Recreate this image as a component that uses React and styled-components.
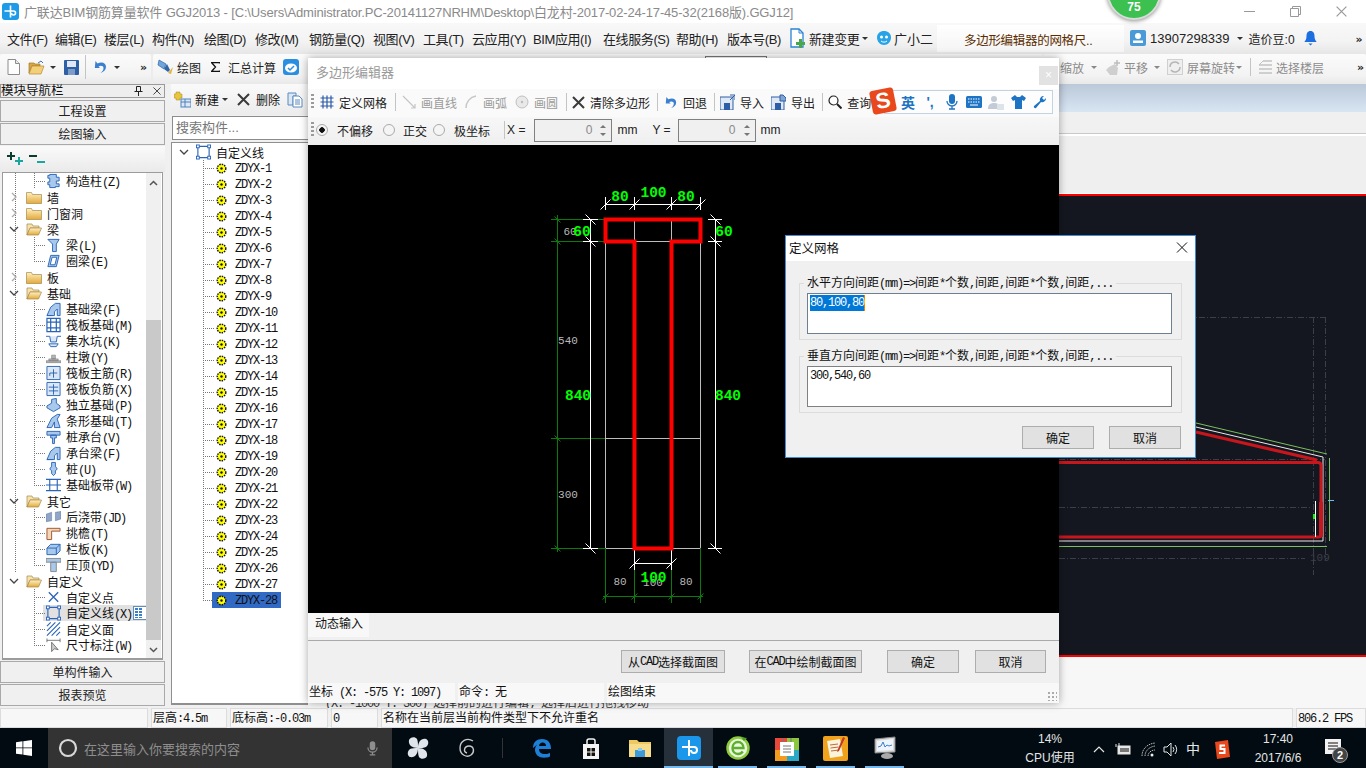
import styled, { createGlobalStyle } from "styled-components";

const GlobalStyle = createGlobalStyle`
  html, body { margin: 0; padding: 0; overflow: hidden; background: #f0f0f0; }
  body { font-family: "Liberation Sans", "Noto Sans CJK SC", sans-serif; font-size: 12px; color: #111; }
  * { box-sizing: border-box; }
`;

const Root = styled.div`
  position: relative;
  width: 1366px;
  height: 768px;
  overflow: hidden;
  display: flex;
  flex-direction: column;
`;

/* 窄等宽西文 + 12px 中文, 模拟宋体 */
const Lat = styled.span`
  font-family: "Liberation Mono", monospace;
  font-size: 12px;
  letter-spacing: -1.2px;
`;

const CompName = styled(Lat)`
  margin-top: 2px;
`;

const Sim = ({ children }) =>
  children.split(/([\x20-\x7e]+)/).map((part, i) =>
    i % 2 ? <Lat key={i}>{part}</Lat> : part
  );

const Ico = styled.svg`
  flex: none;
  display: block;
`;

const Caret = styled.span`
  flex: none;
  width: 0;
  height: 0;
  margin-left: ${(p) => p.$ml ?? 6}px;
  border-left: 3px solid transparent;
  border-right: 3px solid transparent;
  border-top: 3px solid ${(p) => p.$color || "#333"};
`;

const More = styled.span`
  font-family: "DejaVu Sans", sans-serif;
  font-size: 11px;
  font-weight: bold;
  line-height: 10px;
  color: #222;
  align-self: flex-start;
  margin-top: 4px;
`;

/* ---------- 标题栏 ---------- */
const TitleBar = styled.div`
  height: 23px;
  flex: none;
  background: #fff;
  display: flex;
  align-items: center;
  padding-left: 2px;
`;

const TitleText = styled.div`
  margin-left: 5px;
  font-size: 13px;
  color: #8a8a8a;
  white-space: nowrap;
  letter-spacing: -0.16px;
`;

const WinControls = styled.div`
  margin-left: auto;
  display: flex;
  align-items: center;
  padding-right: 2px;
`;

const WinBtn = styled.div`
  width: 46px;
  height: 20px;
  display: flex;
  align-items: center;
  justify-content: center;
`;

/* ---------- 菜单栏 ---------- */
const MenuBar = styled.div`
  height: 31px;
  flex: none;
  display: flex;
  align-items: center;
  padding: 0 0 1px 7px;
  background: linear-gradient(#f8f8f8, #f3f3f3 60%, #e6e6e6);
  font-size: 13px;
  color: #222;
  position: relative;
`;

const MenuItem = styled.div`
  width: ${(p) => p.$w}px;
  flex: none;
  white-space: nowrap;
  letter-spacing: -0.4px;
`;

const MenuGroup = styled.div`
  display: flex;
  align-items: center;
  flex: none;
  margin-left: ${(p) => p.$ml || 0}px;
`;

const NoticeTab = styled.div`
  width: 187px;
  height: 27px;
  margin-left: 4px;
  flex: none;
  background: linear-gradient(#fff, #f4f4f4);
  color: #5c2d00;
  font-size: 12.5px;
  letter-spacing: -0.3px;
  padding: 5px 0 0 27px;
  white-space: nowrap;
`;

const AccountText = styled.span`
  flex: none;
  margin-left: ${(p) => p.$ml}px;
  font-size: 12px;
  white-space: nowrap;
  letter-spacing: ${(p) => p.$ls || 0}px;
`;

/* ---------- 工具栏 ---------- */
const ToolBar = styled.div`
  height: 30px;
  flex: none;
  display: flex;
  background: #ececec;
  font-size: 12px;
  color: #222;
`;

const ToolSection = styled.div`
  height: 30px;
  display: flex;
  align-items: center;
  flex: none;
  width: ${(p) => p.$w}px;
  padding: 0 0 4px ${(p) => p.$pl || 0}px;
  margin-left: ${(p) => p.$ml || 0}px;
  background: linear-gradient(#fbfbfb, #f3f3f3 70%, #e9e9e9);
  border-radius: 2px;
  color: ${(p) => (p.$muted ? "#8c8c8c" : "#222")};
  font-size: 12px;
`;

const ToolItem = styled.div`
  display: flex;
  align-items: center;
  flex: none;
  gap: ${(p) => p.$gap ?? 5}px;
  margin-left: ${(p) => p.$ml || 0}px;
  white-space: nowrap;
  color: ${(p) => (p.$off ? "#9a9a9a" : "inherit")};
`;

const ToolSep = styled.div`
  width: 1px;
  height: ${(p) => p.$h || 18}px;
  flex: none;
  background: #c4c4c4;
  margin-left: ${(p) => p.$ml || 0}px;
`;

const Grip = styled.div`
  width: 3px;
  height: 16px;
  flex: none;
  background: repeating-linear-gradient(#9a9a9a 0 2px, transparent 2px 4px);
`;

const PeekBox = styled.div`
  width: 62px;
  height: 3px;
  flex: none;
  align-self: flex-start;
  margin: 2px 0 0 406px;
  background: #fff;
  border: 1px solid #777;
  border-bottom: 0;
`;

/* ---------- 主体 ---------- */
const Body = styled.div`
  height: 624px;
  flex: none;
  display: flex;
`;

const Nav = styled.div`
  width: 165px;
  flex: none;
  display: flex;
  flex-direction: column;
`;

const NavHead = styled.div`
  height: 14px;
  flex: none;
  display: flex;
  align-items: center;
  border: 1px solid #9a9a9a;
  background: #eee;
  font-size: 12.5px;
  line-height: 12px;
  white-space: nowrap;
  margin-bottom: 2px;
`;

const NavBtn = styled.div`
  height: 22px;
  flex: none;
  margin-bottom: 1px;
  padding-bottom: 2px;
  border: 1px solid #a9a9a9;
  background: #f0f0f0;
  display: flex;
  align-items: center;
  justify-content: center;
  font-size: 12px;
  color: #222;
`;

const NavTools = styled.div`
  height: 26px;
  flex: none;
  display: flex;
  align-items: center;
  gap: 5px;
  padding-left: 7px;
  background: linear-gradient(#fafafa, #eaeaea);
`;

const NavTree = styled.div`
  height: 488px;
  flex: none;
  margin: 0 2px 1px;
  border: 1px solid #9c9c9c;
  border-bottom-width: 2px;
  background: #fff;
  display: flex;
`;

const NavRows = styled.div`
  width: 143px;
  flex: none;
  overflow: hidden;
`;

const guideV = (x) =>
  `linear-gradient(#777 50%, transparent 50%) ${x}px 0 / 1px 2px repeat-y`;

const NavRow = styled.div`
  position: relative;
  height: 16px;
  display: flex;
  align-items: center;
  white-space: nowrap;
  padding-left: ${(p) => (p.$leaf ? 43 : 6)}px;
  background: ${(p) => (p.$rail ? guideV(12) : "none")};
  font-size: 12px;

  &::before {
    content: "";
    display: ${(p) => (p.$leaf ? "block" : "none")};
    position: absolute;
    left: 31px;
    top: 0;
    width: 1px;
    height: ${(p) => (p.$last ? "50%" : "100%")};
    background: ${guideV(0)};
  }

  &::after {
    content: "";
    display: ${(p) => (p.$leaf ? "block" : "none")};
    position: absolute;
    left: 31px;
    top: 8px;
    width: 12px;
    height: 1px;
    background: linear-gradient(90deg, #777 50%, transparent 50%) 0 0 / 2px 1px repeat-x;
  }
`;

const NavLabel = styled.span`
  margin-left: 5px;
  padding-right: 1px;
  display: flex;
  align-items: center;
  height: 16px;
`;

const HotRow = styled.div`
  position: absolute;
  left: 40px;
  right: 0;
  top: 0;
  height: 16px;
  background: #e1e1e1;
  z-index: 0;
`;

const RowContent = styled.div`
  position: relative;
  z-index: 1;
  display: flex;
  align-items: center;
  background: transparent;
`;

const MiniColumns = styled.div`
  position: absolute;
  right: 0;
  top: 1px;
  width: 13px;
  height: 14px;
  z-index: 1;
  background: #fff;
  border: 1px solid #5f8fc0;
  border-right: 0;
  padding: 1px;
  display: flex;
  gap: 1px;
`;

const MiniCol = styled.div`
  width: 3px;
  background: repeating-linear-gradient(#3c7fc9 0 2px, #fff 2px 3px);
`;

const ScrollBar = styled.div`
  width: 15px;
  flex: none;
  display: flex;
  flex-direction: column;
  background: #f0f0f0;
`;

const ScrollArrow = styled.div`
  height: 19px;
  flex: none;
  display: flex;
  align-items: center;
  justify-content: center;
`;

const ScrollTrack = styled.div`
  flex: 1;
  display: flex;
  flex-direction: column;
`;

const ScrollThumb = styled.div`
  margin-top: 128px;
  height: 320px;
  background: #c9c9c9;
`;

/* 构件列表 */
const CompPanel = styled.div`
  width: 137px;
  flex: none;
  margin-left: 6px;
  display: flex;
  flex-direction: column;
  background: #f0f0f0;
`;

const CompTools = styled.div`
  height: 31px;
  flex: none;
  display: flex;
  align-items: center;
  padding-left: 3px;
  font-size: 12px;
  background: linear-gradient(#fafafa, #ececec);
  white-space: nowrap;
  overflow: hidden;
`;

const SearchBox = styled.div`
  height: 24px;
  flex: none;
  margin: 1px 0 2px 1px;
  border: 1px solid #8c8c8c;
  border-right: 0;
  background: #fff;
  color: #777;
  font-size: 13px;
  line-height: 22px;
  padding-left: 3px;
`;

const CompTree = styled.div`
  flex: 1;
  background: #fff;
  border: 1px solid #8f8f8f;
  border-right: 0;
  border-bottom-width: 2px;
  margin-bottom: 3px;
  padding-top: 1px;
  position: relative;
`;

const CompRoot = styled.div`
  height: 16px;
  display: flex;
  align-items: center;
  padding-left: 7px;
  font-size: 12px;
`;

const CompRow = styled.div`
  position: relative;
  height: 16px;
  display: flex;
  align-items: center;
  padding-left: 44px;

  &::before {
    content: "";
    position: absolute;
    left: 31px;
    top: 0;
    width: 1px;
    height: ${(p) => (p.$last ? "50%" : "100%")};
    background: ${guideV(0)};
  }

  &::after {
    content: "";
    position: absolute;
    left: 31px;
    top: 8px;
    width: 12px;
    height: 1px;
    background: linear-gradient(90deg, #777 50%, transparent 50%) 0 0 / 2px 1px repeat-x;
  }
`;

const CompChip = styled.div`
  width: 69px;
  height: 16px;
  margin-left: -4px;
  padding-left: 4px;
  display: flex;
  align-items: center;
  gap: 8px;
  background: ${(p) => (p.$on ? "#316ac5" : "transparent")};
  color: #111;
`;

/* 右侧绘图区 */
const Workspace = styled.div`
  flex: 1;
  display: flex;
  flex-direction: column;
  background: #f7f7f7;
`;

const BlueBand = styled.div`
  height: 28px;
  flex: none;
  background: linear-gradient(#bbc8d8, #d8e5f3);
`;

const PropStrip = styled.div`
  height: 22px;
  flex: none;
  background: #f0f0f0;
  border-bottom: 1px solid #c9c9c9;
`;

const GreyBlock = styled.div`
  height: 60px;
  flex: none;
  background: #efefef;
  border-top: 2px solid #fff;
  border-bottom: 1px solid #fff;
`;

const RedRule = styled.div`
  height: ${(p) => p.$h}px;
  flex: none;
  background: #f00;
`;

const DarkCanvas = styled.svg`
  width: 1058px;
  height: 459px;
  flex: none;
  display: block;
  background: #14171f;
`;

const HintRow = styled.div`
  margin-top: auto;
  height: 8px;
  flex: none;
  overflow: hidden;
  font-size: 12px;
  line-height: 7px;
  padding-left: 17px;
  white-space: nowrap;
  color: #333;
`;

/* ---------- 状态栏 ---------- */
const StatusBar = styled.div`
  height: 20px;
  flex: none;
  display: flex;
  gap: 3px;
  background: #f0f0f0;
`;

const StatusCell = styled.div`
  width: ${(p) => p.$w}px;
  flex: ${(p) => (p.$w ? "none" : 1)};
  background: #f7f7f7;
  border: 1px solid #dcdcdc;
  font-size: 12px;
  line-height: 18px;
  padding-left: 1px;
  white-space: nowrap;
`;

/* ---------- 任务栏 ---------- */
const Taskbar = styled.div`
  height: 40px;
  flex: none;
  display: flex;
  background: #010b11;
  color: #fff;
`;

const StartBtn = styled.div`
  width: 48px;
  display: flex;
  align-items: center;
  justify-content: center;
`;

const SearchTask = styled.div`
  width: 344px;
  flex: none;
  background: #333;
  display: flex;
  align-items: center;
  padding-left: 10px;
  color: #8e8e8e;
  font-size: 13px;
`;

const SearchTaskText = styled.span`
  margin-left: 6px;
  flex: 1;
`;

const TaskIcon = styled.div`
  position: relative;
  width: ${(p) => p.$w || 49}px;
  margin-left: ${(p) => p.$ml || 0}px;
  flex: none;
  display: flex;
  align-items: center;
  justify-content: center;
  background: ${(p) => (p.$active ? "#25303a" : "transparent")};

  &::after {
    content: "";
    display: ${(p) => (p.$open ? "block" : "none")};
    position: absolute;
    left: ${(p) => (p.$active ? 0 : 5)}px;
    right: ${(p) => (p.$active ? 0 : 5)}px;
    bottom: 0;
    height: 2px;
    background: #76b9ed;
  }
`;

const TaskSep = styled.div`
  width: 1px;
  height: 20px;
  align-self: center;
  background: #333;
  margin: 0 14px 0 11px;
  flex: none;
`;

const Tray = styled.div`
  margin-left: auto;
  display: flex;
  align-items: stretch;
  padding-right: 10px;
`;

const TrayItem = styled.div`
  width: ${(p) => p.$w}px;
  margin-left: ${(p) => p.$ml || 0}px;
  padding-top: 2px;
  flex: none;
  display: flex;
  flex-direction: column;
  align-items: center;
  justify-content: center;
  font-size: ${(p) => p.$fs || 12}px;
  line-height: ${(p) => p.$lh || 19}px;
  color: #e6e6e6;
  white-space: nowrap;
`;

const NoticeIcon = styled.div`
  position: relative;
  width: 18px;
  height: 20px;
`;

const NoticeBadge = styled.div`
  position: absolute;
  left: 7px;
  top: 8px;
  width: 16px;
  height: 16px;
  border-radius: 50%;
  background: #444;
  border: 1px solid #999;
  font-size: 11px;
  font-weight: bold;
  line-height: 14px;
  text-align: center;
  color: #fff;
`;

/* ---------- 多边形编辑器窗口 ---------- */
const Editor = styled.div`
  position: absolute;
  left: 308px;
  top: 58px;
  width: 751px;
  height: 645px;
  display: flex;
  flex-direction: column;
  background: #f0f0f0;
  box-shadow: 0 0 8px rgba(0, 0, 0, 0.35);
`;

const EditorTitle = styled.div`
  height: 31px;
  flex: none;
  background: #fff;
  color: #9a9a9a;
  font-size: 13px;
  padding: 4px 0 0 8px;
  display: flex;
  justify-content: space-between;
`;

const EditorClose = styled.div`
  width: 19px;
  height: 19px;
  margin: 4px 1px 0 0;
  background: #e2e2e2;
  color: #fff;
  font-size: 12px;
  line-height: 18px;
  text-align: center;
`;

const EditorTools = styled.div`
  height: 28px;
  flex: none;
  display: flex;
  align-items: center;
  padding: 0 0 2px 3px;
  font-size: 12px;
  color: #222;
  background: ${(p) => p.$bg};
`;

const Radio = styled.span`
  flex: none;
  width: 12px;
  height: 12px;
  border-radius: 50%;
  border: 1px solid #aaa;
  background: ${(p) => (p.$on ? "radial-gradient(circle, #111 0 2.5px, #f5f5f5 3px)" : "#f5f5f5")};
  margin-left: ${(p) => p.$ml || 0}px;
`;

const Plain = styled.span`
  flex: none;
  margin-left: ${(p) => p.$ml || 0}px;
  white-space: nowrap;
`;

const SpinBox = styled.div`
  width: 78px;
  height: 23px;
  flex: none;
  margin-left: ${(p) => p.$ml}px;
  border: 1px solid #808080;
  background: #f0f0f0;
  color: #8a8a8a;
  display: flex;
  align-items: center;
  justify-content: flex-end;
`;

const SpinArrows = styled.div`
  width: 12px;
  margin: 0 2px 0 5px;
  display: flex;
  flex-direction: column;
  align-items: center;
  gap: 5px;
`;

const SpinUp = styled.span`
  width: 0;
  height: 0;
  border-left: 3px solid transparent;
  border-right: 3px solid transparent;
  border-bottom: 3px solid #777;
`;

const SpinDown = styled(SpinUp)`
  border-bottom: 0;
  border-top: 3px solid #777;
`;

const CadCanvas = styled.svg`
  width: 751px;
  height: 468px;
  flex: none;
  display: block;
  background: #000;
`;

const TabRow = styled.div`
  height: 28px;
  flex: none;
  border-bottom: 1px solid #aaa;
`;

const TabLabel = styled.div`
  width: 61px;
  height: 24px;
  background: #f8f8f8;
  font-size: 12px;
  line-height: 23px;
  padding-left: 7px;
`;

const ActionRow = styled.div`
  height: 42px;
  flex: none;
  display: flex;
  align-items: flex-start;
  padding-top: 9px;
`;

const CmdBtn = styled.div`
  width: ${(p) => p.$w}px;
  height: 23px;
  flex: none;
  margin-left: ${(p) => p.$ml}px;
  background: #e1e1e1;
  border: 1px solid #adadad;
  display: flex;
  align-items: center;
  justify-content: center;
  font-size: 12px;
  color: #111;
  white-space: nowrap;
`;

const EditorStatus = styled.div`
  height: 20px;
  flex: none;
  display: flex;
  gap: 3px;
  background: #f0f0f0;
  position: relative;
`;

const EditorStatusCell = styled.div`
  width: ${(p) => p.$w}px;
  flex: ${(p) => (p.$w ? "none" : 1)};
  background: #f8f8f8;
  font-size: 12px;
  line-height: 19px;
  padding-left: 1px;
  white-space: nowrap;
`;

const SizeGrip = styled.div`
  position: absolute;
  right: 2px;
  bottom: 2px;
  width: 10px;
  height: 10px;
  background: radial-gradient(circle, #aaa 1px, transparent 1.2px) 0 0 / 4px 4px;
`;

/* 搜狗输入法条 */
const SogouBar = styled.div`
  position: absolute;
  left: 884px;
  top: 90px;
  width: 169px;
  height: 24px;
  background: #fdfdfd;
  border: 1px solid #c4d3e2;
  display: flex;
  align-items: center;
  justify-content: flex-end;
  padding-right: 1px;
`;

const SogouSlot = styled.div`
  width: 22px;
  flex: none;
  display: flex;
  justify-content: center;
  align-items: center;
  color: #1d74c4;
  font-size: 14px;
  font-weight: bold;
`;

const SogouLogo = styled.div`
  position: absolute;
  left: 871px;
  top: 89px;
  width: 24px;
  height: 24px;
  background: #e8481c;
  border-radius: 3px;
  transform: rotate(-11deg);
  color: #fff;
  font-family: "Liberation Sans", sans-serif;
  font-size: 22px;
  font-weight: bold;
  line-height: 24px;
  text-align: center;
`;

/* 绿色悬浮球 */
const Badge = styled.div`
  position: absolute;
  left: 1107px;
  top: -34px;
  width: 54px;
  height: 54px;
  border-radius: 50%;
  background: #3cc04f;
  border: 2px solid #d7dcd8;
  box-shadow: 0 1px 4px rgba(0, 0, 0, 0.45);
  color: #fff;
  font-size: 12px;
  font-weight: bold;
  text-align: center;
  padding-top: 33px;
  line-height: 13px;
`;

/* ---------- 定义网格 对话框 ---------- */
const Dialog = styled.div`
  position: absolute;
  left: 785px;
  top: 235px;
  width: 411px;
  height: 223px;
  background: #f0f0f0;
  border: 1px solid #3f8ed4;
  display: flex;
  flex-direction: column;
`;

const DialogTitle = styled.div`
  height: 25px;
  flex: none;
  background: #fff;
  padding: 0 0 2px 3px;
  display: flex;
  align-items: center;
  justify-content: space-between;
  font-size: 12.5px;
`;

const DialogBody = styled.div`
  flex: 1;
  padding: 22px 13px 0;
  display: flex;
  flex-direction: column;
`;

const Group = styled.div`
  position: relative;
  height: 57px;
  flex: none;
  margin-bottom: 16px;
  border: 1px solid #dcdcdc;
  padding: 9px 9px 0 7px;
`;

const GroupLegend = styled.div`
  position: absolute;
  left: 4px;
  top: -8px;
  background: #f0f0f0;
  padding: 0 3px;
  font-size: 12px;
  line-height: 15px;
  white-space: nowrap;
`;

const TextBox = styled.div`
  height: 41px;
  background: #fff;
  border: 1px solid ${(p) => p.$border};
  padding: 1px 2px;
  font-size: 12px;
  line-height: 15px;
`;

const Selected = styled.span`
  display: inline-block;
  background: #0078d7;
  color: #fff;
  border-right: 1px solid #f08000;
`;

const DialogButtons = styled.div`
  display: flex;
  justify-content: flex-end;
  gap: 15px;
  margin-top: -3px;
  padding-right: 1px;
`;

/* ---------- 图标 ---------- */
const AppLogo = () => (
  <Ico width="17" height="17" viewBox="0 0 17 17">
    <rect width="17" height="17" rx="3" fill="#1e9be8" />
    <path d="M8.5 2.5v12M2.5 8h9a2 2 0 1 1-2 2" stroke="#fff" strokeWidth="1.6" fill="none" />
  </Ico>
);

const NewFileIco = () => (
  <Ico width="13" height="16" viewBox="0 0 13 16">
    <path d="M1 .5h7.5l4 4v11H1z" fill="#fdfdfd" stroke="#8c8c8c" />
    <path d="M8.5.5v4h4" fill="#e8e8e8" stroke="#8c8c8c" />
  </Ico>
);

const OpenIco = () => (
  <Ico width="17" height="15" viewBox="0 0 17 15">
    <path d="M1 3h5l1 1h5v2H4L1 13z" fill="#d9a441" stroke="#a57b26" strokeWidth=".7" />
    <path d="M4 6h12l-3 8H1z" fill="#f3cf7a" stroke="#b48a32" strokeWidth=".7" />
    <path d="M10 3l3-2 2 2" stroke="#3973b9" fill="none" />
  </Ico>
);

const SaveIco = () => (
  <Ico width="15" height="15" viewBox="0 0 15 15">
    <rect width="15" height="15" rx="1" fill="#2e5ea6" />
    <rect x="3" y="1" width="9" height="6" fill="#dfe8f4" />
    <rect x="4" y="9" width="7" height="6" fill="#7d9cc7" />
  </Ico>
);

const UndoIco = ({ s = 14 }) => (
  <Ico width={s} height={s} viewBox="0 0 14 14">
    <path d="M3.5 3.5C8 1.5 12 3 12 7c0 3-2.500 5-5.500 6 2-1.500 3-3 3-5 0-2-2.500-2.800-5-1.500L6 8 .8 8 1.500 1z" fill="#3a7fd0" />
  </Ico>
);

const DrawIco = () => (
  <Ico width="17" height="17" viewBox="0 0 17 17">
    <path d="M2 1l7 4-2 5-6-4z" fill="#6fa6dc" stroke="#2f66a8" strokeWidth=".7" />
    <path d="M7 10l3-5 3 6-2 2z" fill="#2f66a8" />
    <path d="M11 14l5-6-2 7z" fill="#e2b33a" />
  </Ico>
);

const CloudIco = () => (
  <Ico width="16" height="16" viewBox="0 0 16 16">
    <rect width="16" height="16" rx="3" fill="#2a8fe0" />
    <ellipse cx="8" cy="9" rx="6" ry="4.500" fill="#fff" />
    <path d="M5 9l2 2 4-4" stroke="#2a8fe0" strokeWidth="1.500" fill="none" />
  </Ico>
);

const ChangeIco = () => (
  <Ico width="15" height="20" viewBox="0 0 15 20">
    <path d="M1 1h8l4 4v14H1z" fill="#fff" stroke="#2b83d4" strokeWidth="1.300" />
    <path d="M9 1v4h4" fill="none" stroke="#2b83d4" />
    <path d="M9 11h3v3h3v3h-3v3H9v-3H6v-3h3z" fill="#4aa84a" />
  </Ico>
);

const RobotIco = () => (
  <Ico width="16" height="16" viewBox="0 0 16 16">
    <path d="M8 1c4 0 7 2.500 7 6.500S12 15 8 15s-7-3.500-7-7.500S4 1 8 1z" fill="#29a3e8" />
    <circle cx="5.500" cy="7" r="1.500" fill="#fff" />
    <circle cx="10.500" cy="7" r="1.500" fill="#fff" />
    <path d="M5 11c2 1.500 4 1.500 6 0" stroke="#fff" fill="none" />
  </Ico>
);

const UserIco = () => (
  <Ico width="16" height="16" viewBox="0 0 16 16">
    <rect width="16" height="16" rx="2" fill="#4a9ad8" />
    <circle cx="8" cy="6" r="3" fill="#fff" />
    <rect x="3" y="10.500" width="10" height="2.500" fill="#fff" />
  </Ico>
);

const BellIco = () => (
  <Ico width="13" height="16" viewBox="0 0 13 16">
    <path d="M6.500 1C9.500 1 10.500 3.500 10.500 6c0 3 .8 4.500 2.200 6H.3C1.700 10.500 2.500 9 2.500 6 2.500 3.500 3.500 1 6.500 1z" fill="#1d6fe0" />
    <path d="M4.500 13.500h4L6.500 15.500z" fill="#1d6fe0" />
  </Ico>
);

const HandIco = () => (
  <Ico width="16" height="17" viewBox="0 0 16 17">
    <path d="M4 8l6-3 3 4-1 7H5L1 11z" fill="#cfcfcf" />
    <path d="M12 1v6M9 4h6" stroke="#bdbdbd" strokeWidth="1.500" />
  </Ico>
);

const RotateIco = () => (
  <Ico width="16" height="16" viewBox="0 0 16 16">
    <rect x=".5" y=".5" width="15" height="15" fill="#efefef" stroke="#d0d0d0" />
    <path d="M3 8a5 5 0 0 1 9-3M13 8a5 5 0 0 1-9 3" stroke="#b5b5b5" fill="none" strokeWidth="1.500" />
  </Ico>
);

const FloorIco = () => (
  <Ico width="14" height="14" viewBox="0 0 14 14">
    <path d="M5 1h9M1 5h13M1 9h13M1 13h13" stroke="#c2c2c2" strokeWidth="1.600" />
    <path d="M1 5l4-4" stroke="#c2c2c2" />
  </Ico>
);

const PinIco = () => (
  <Ico width="9" height="10" viewBox="0 0 9 10">
    <path d="M2.500 .5h4v5h-4zM.5 5.500h8M4.500 5.500V10" stroke="#222" fill="none" />
  </Ico>
);

const CrossThin = ({ s = 9, c = "#333", w = 1 }) => (
  <Ico width={s} height={s} viewBox="0 0 9 9">
    <path d="M.5.5l8 8M8.500.5l-8 8" stroke={c} strokeWidth={w} />
  </Ico>
);

const BigX = () => (
  <Ico width="13" height="13" viewBox="0 0 13 13">
    <path d="M1 1l11 11M12 1L1 12" stroke="#3a3a3a" strokeWidth="2" />
  </Ico>
);

const NewCompIco = () => (
  <Ico width="17" height="17" viewBox="0 0 17 17">
    <path d="M2 1h4v2h2v4H6v2H2V7H0V3h2z" fill="#e8c53f" stroke="#a48a22" strokeWidth=".5" />
    <rect x="7" y="8" width="10" height="8" fill="#dbe7f5" stroke="#4f82bd" />
    <path d="M7 11h10M11 8v8" stroke="#4f82bd" />
  </Ico>
);

const CopyIco = () => (
  <Ico width="16" height="16" viewBox="0 0 16 16">
    <path d="M1 1h8v3h-3v9H1z" fill="#dde7f3" stroke="#5c8ac0" />
    <path d="M6 4h6l3 3v8H6z" fill="#fff" stroke="#5c8ac0" />
    <path d="M8 8h5M8 10h5M8 12h5" stroke="#5c8ac0" />
  </Ico>
);

const ExpandIco = ({ plus }) => (
  <Ico width="17" height="16" viewBox="0 0 17 16">
    {plus && <path d="M4 1v8M0 5h8" stroke="#0b3b2e" strokeWidth="2" />}
    {!plus && <path d="M0 5h8" stroke="#0b3b2e" strokeWidth="2" />}
    {plus && <path d="M12 6v8M8 10h8" stroke="#1aa5a0" strokeWidth="2" />}
    {!plus && <path d="M8 11h8" stroke="#1aa5a0" strokeWidth="2" />}
  </Ico>
);

const Chevron = ({ open }) => (
  <Ico width="10" height="10" viewBox="0 0 10 10">
    {open ? (
      <path d="M1 3l4 4 4-4" stroke="#444" strokeWidth="1.300" fill="none" />
    ) : (
      <path d="M3 1l4 4-4 4" stroke="#aaa" strokeWidth="1.300" fill="none" />
    )}
  </Ico>
);

const FolderIco = ({ open }) => (
  <Ico width="16" height="13" viewBox="0 0 16 13">
    <defs>
      <linearGradient id="fg" x1="0" y1="0" x2="0" y2="1">
        <stop offset="0" stopColor="#fff1c2" />
        <stop offset="1" stopColor="#e3a93a" />
      </linearGradient>
    </defs>
    {open ? (
      <>
        <path d="M1 1h5l1 2h6v2H4l-3 7z" fill="#f5e2ac" stroke="#a68a4c" strokeWidth=".7" />
        <path d="M4 5h11.500L12.500 12H1z" fill="url(#fg)" stroke="#a68a4c" strokeWidth=".7" />
      </>
    ) : (
      <path d="M.5 1.500h5l1 2h9v9H.5z" fill="url(#fg)" stroke="#a68a4c" strokeWidth=".7" />
    )}
  </Ico>
);

const B = "#2a64b8";
const L = "#a8c9ec";
const treeIcons = {
  gz: <path d="M4 1h7v3h3v4h-3v3h3v3h-4v1H4v-3H2V9h2V5H2V2h2z" fill={L} stroke={B} />,
  beam: <path d="M2 2h12l-3 5v8H7V7z" fill={L} stroke={B} />,
  ring: <path d="M5 2h9l-3 12H2zM6.500 4L4.500 12h5l2-8z" fill={L} stroke={B} />,
  fb: <path d="M1 15l4-9 5-4h5v13h-3V8l-3 3v4zM1 15h6" fill={L} stroke={B} />,
  raft: <path d="M1 1h14v14H1zM5 1v14M11 1v14M1 5h14M1 11h14" fill="#fff" stroke={B} strokeWidth="1.300" />,
  pit: <path d="M0 3h4l1 6h6l1-6h4M3 11h10l-2 3H5z" fill="#dbe7f5" stroke={B} />,
  pad: <path d="M0 12h16v2H0zM3 10h10v2H3zM6 6h4v4H6z" fill="#b5b5b5" stroke="#777" strokeWidth=".6" />,
  main: <path d="M1 1h14v14H1zM8 4v9M4 8h8M4 8v3" fill="#dbe7f5" stroke={B} />,
  neg: <path d="M1 1h14v14H1zM8 3v11M3 6h10M3 10h10" fill="#dbe7f5" stroke={B} />,
  ind: <path d="M1 9l5-3V2l5-1v5l4 3v2l-7 4-7-4z" fill={L} stroke={B} />,
  strip: <path d="M1 15l2-4 3-6 6-4h3l-3 5 3 9H9V9L6 15z" fill={L} stroke={B} />,
  cap: <path d="M1 2h14v4H1zM5 6h6v3H9v6H7V9H5z" fill={L} stroke={B} />,
  pile: <path d="M6 1h4v4l2 3-2 2v3l-2 2-2-2v-3L4 8l2-3z" fill={L} stroke={B} />,
  band: <path d="M0 2h16M0 14h16M4 2v12M12 2v12M0 8h16" stroke={B} fill="none" strokeWidth="1.200" />,
  pour: <path d="M0 5l6-2v9l-6 1zM10 3l6-1v8l-6 2z" fill="#8fa6c9" stroke="#5a6f98" strokeWidth=".5" />,
  eave: <path d="M1 3h14v3H6v9H1z" fill="#f0d8b8" stroke="#a0522d" />,
  rail: <path d="M1 7l4-4h10v7l-4 4H1zM1 7h10v7M11 7l4-4" fill={L} stroke={B} />,
  top: <path d="M0 1h16v4H0zM5 5h6v10H5z" fill={L} stroke="#888" />,
  point: <path d="M3 3l10 10M13 3L3 13" stroke={B} strokeWidth="1.400" />,
  line: <path d="M2 2h12v12H2z" fill="none" stroke={B} strokeWidth="1.200" />,
  area: <path d="M1 15L15 1M1 10L10 1M1 5L5 1M6 15L15 6M11 15l4-4" stroke={B} strokeWidth="1.200" />,
  dim: <path d="M1 1v4M15 1v4M1 3h14M6 5v10l3-3 4 1z" fill="#ccc" stroke="#555" strokeWidth=".8" />,
};

const TreeIco = ({ kind }) => (
  <Ico width="15" height="16" viewBox="0 0 16 16">
    {treeIcons[kind]}
    {kind === "line" && (
      <>
        <rect x="0.5" y="0.5" width="3" height="3" fill="#fff" stroke={B} />
        <rect x="12.500" y="0.5" width="3" height="3" fill="#fff" stroke={B} />
        <rect x="0.5" y="12.500" width="3" height="3" fill="#fff" stroke={B} />
        <rect x="12.500" y="12.500" width="3" height="3" fill="#fff" stroke={B} />
      </>
    )}
  </Ico>
);

const GearDot = () => (
  <Ico width="11" height="11" viewBox="0 0 11 11">
    <circle cx="5.500" cy="5.500" r="4.300" fill="#ff0" stroke="#111" strokeWidth="1.400" strokeDasharray="1.500 1" />
    <circle cx="5.500" cy="5.500" r="1.200" fill="#111" />
  </Ico>
);

const GridIco = () => (
  <Ico width="14" height="14" viewBox="0 0 14 14">
    <path d="M.5 3h13M.5 7h13M.5 11h13M3 .5v13M7 .5v13M11 .5v13" stroke="#2c5aa8" strokeWidth="1.200" />
  </Ico>
);

const LineIco = () => (
  <Ico width="14" height="14" viewBox="0 0 14 14">
    <path d="M1 1l12 12M13 9v4H9" stroke="#c5c5c5" strokeWidth="1.200" fill="none" />
  </Ico>
);

const ArcIco = () => (
  <Ico width="14" height="14" viewBox="0 0 14 14">
    <path d="M2 13C2 7 6 2 12 1" stroke="#c5c5c5" strokeWidth="1.400" fill="none" />
  </Ico>
);

const CircleIco = () => (
  <Ico width="14" height="14" viewBox="0 0 14 14">
    <circle cx="7" cy="7" r="6" fill="#e9e9e9" stroke="#c0c0c0" />
    <circle cx="7" cy="7" r="1.200" fill="#bbb" />
  </Ico>
);

const DiskIco = ({ up }) => (
  <Ico width="15" height="16" viewBox="0 0 15 16">
    <rect x="0" y="3" width="13" height="13" fill="#dfe8f4" stroke="#2e5ea6" />
    <rect x="4" y="9" width="6" height="7" fill="#2e5ea6" />
    <path d={up ? "M10 1h5v5M15 1l-5 5" : "M9 1h3l3 3v3H9z"} stroke="#2e5ea6" fill={up ? "none" : "#7fa5d4"} />
  </Ico>
);

const SearchIco = () => (
  <Ico width="14" height="14" viewBox="0 0 14 14">
    <circle cx="5.500" cy="5.500" r="4.500" fill="#fff" stroke="#222" strokeWidth="1.200" />
    <path d="M9 9l4.500 4.500" stroke="#222" strokeWidth="2" />
  </Ico>
);

const MicIco = ({ c = "#1d74c4", w = 12, h = 16 }) => (
  <Ico width={w} height={h} viewBox="0 0 12 16">
    <rect x="3" y="0" width="6" height="10" rx="3" fill={c} />
    <path d="M1 7a5 5 0 0 0 10 0M6 12v3M3 15h6" stroke={c} strokeWidth="1.300" fill="none" />
  </Ico>
);

const KeyboardIco = () => (
  <Ico width="16" height="12" viewBox="0 0 16 12">
    <rect width="16" height="12" rx="1.500" fill="#1d74c4" />
    <path d="M2 3h12M2 6h12" stroke="#fff" strokeDasharray="1.500 1" />
    <path d="M4 9h8" stroke="#fff" />
  </Ico>
);

const PersonIco = () => (
  <Ico width="16" height="15" viewBox="0 0 16 15">
    <circle cx="6" cy="4" r="3" fill="#c3ccd6" />
    <path d="M0 14c0-4 2-6 6-6 2 0 4 .5 5 2v4z" fill="#c3ccd6" />
    <rect x="9" y="9" width="7" height="6" fill="#dde3ea" />
  </Ico>
);

const ShirtIco = () => (
  <Ico width="15" height="14" viewBox="0 0 15 14">
    <path d="M4 0L0 3l2 3 2-1v9h7V5l2 1 2-3-4-3-2 2H6z" fill="#1d74c4" />
  </Ico>
);

const WrenchIco = () => (
  <Ico width="14" height="14" viewBox="0 0 14 14">
    <path d="M13 3a3.800 3.800 0 0 1-5 4l-5 6a1.500 1.500 0 0 1-2-2l6-5a3.800 3.800 0 0 1 4-5L9 3l2 2z" fill="#1d74c4" />
  </Ico>
);

/* 任务栏图标 */
const WinLogo = () => (
  <Ico width="16" height="16" viewBox="0 0 16 16">
    <path d="M0 2.200l6.500-.9v6.200H0zM7.300 1.200L16 0v7.500H7.300zM0 8.300h6.500v6.300L0 13.700zM7.300 8.300H16V16l-8.700-1.200z" fill="#fff" />
  </Ico>
);

const Pinwheel = () => (
  <Ico width="22" height="24" viewBox="0 0 22 24">
    <path d="M11 12C5 12 1 9 2 4c1-3 6-4 8-1 1 2 1 5 1 9zM11 12c0-6 3-10 8-9 3 1 3 6 0 8-2 1-5 1-8 1zM11 12c6 0 10 3 9 8-1 3-6 4-8 1-1-2-1-5-1-9zM11 12c0 6-3 10-8 9-3-1-3-6 0-8 2-1 5-1 8-1z" fill="#dfe5ea" />
  </Ico>
);

const Swirl = () => (
  <Ico width="18" height="22" viewBox="0 0 18 22">
    <path d="M15 4C9 0 2 4 2 11s7 10 11 7 3-9-2-9-6 6-2 7" stroke="#c9c9c9" strokeWidth="1.400" fill="none" />
  </Ico>
);

const EdgeIco = () => (
  <Ico width="20" height="20" viewBox="0 0 20 20">
    <path d="M1 10C1 4 5 1 10 1c6 0 9 4 9 10H7c0 3 2 5 6 5 2 0 4-.6 5-1.300v3.800c-1.500.8-3.500 1.200-6 1.200-5 0-9-3-9-8 0-3 1.500-5 4-6.500C5 6.500 3 8 1 10zm6-2h7c0-2-1.200-3.500-3.300-3.500S7.300 6 7 8z" fill="#1d7fd6" />
  </Ico>
);

const StoreIco = () => (
  <Ico width="18" height="21" viewBox="0 0 18 21">
    <path d="M1 6h16v15H1z" fill="#f4f4f4" />
    <path d="M5 6V3a2 2 0 0 1 2-2h4a2 2 0 0 1 2 2v3" fill="none" stroke="#f4f4f4" strokeWidth="1.500" />
    <path d="M5 10h3.500v3.500H5zM9.500 10H13v3.500H9.500zM5 14.500h3.500V18H5zM9.500 14.500H13V18H9.500z" fill="#111" />
  </Ico>
);

const ExplorerIco = () => (
  <Ico width="22" height="18" viewBox="0 0 22 18">
    <path d="M0 1h8l2 2h12v15H0z" fill="#eec95f" />
    <rect y="5" width="22" height="13" fill="#f6dc8b" />
    <rect x="6" y="11" width="10" height="7" fill="#3c9ad9" />
    <rect x="9" y="9" width="4" height="3" fill="#8dc8ee" />
  </Ico>
);

const GtjIco = () => (
  <Ico width="24" height="24" viewBox="0 0 24 24">
    <rect width="24" height="24" rx="4" fill="#1a97ea" />
    <path d="M12 4v16M5 11h12a3 3 0 1 1-3 3" stroke="#fff" strokeWidth="2" fill="none" />
  </Ico>
);

const GreenE = () => (
  <Ico width="24" height="24" viewBox="0 0 24 24">
    <circle cx="12" cy="12" r="10.500" fill="#eaf7dc" stroke="#8ccc3c" strokeWidth="2.500" />
    <path d="M6.500 12h11c0-3.500-2.300-6-5.500-6s-5.500 2.700-5.500 6 2.300 6 5.500 6c2 0 3.800-1 4.800-2.500" stroke="#5cb030" strokeWidth="2.400" fill="none" />
    <path d="M15 1l6 1-3 3" fill="#4f9d2a" />
  </Ico>
);

const PadIco = () => (
  <Ico width="24" height="25" viewBox="0 0 24 25">
    <rect y="2" width="12" height="12" fill="#e8483a" />
    <rect x="12" y="2" width="12" height="12" fill="#8cc63f" />
    <rect y="14" width="12" height="11" fill="#f29b1d" />
    <rect x="12" y="14" width="12" height="11" fill="#2aa8c6" />
    <rect x="5" y="6" width="14" height="14" fill="#fff" />
    <path d="M8 10h8M8 13h8M8 16h8M8 2v4M16 2v4" stroke="#777" />
  </Ico>
);

const NoteIco = () => (
  <Ico width="25" height="25" viewBox="0 0 25 25">
    <rect width="25" height="25" rx="2" fill="#f0a21c" />
    <path d="M4 5l13-2 3 17-13 2z" fill="#fcf3dc" />
    <path d="M7 9l8-1M7.500 12l8-1M8 15l8-1" stroke="#c06a3a" />
    <path d="M22 2l-6 13-2 1 1-3 5-12z" fill="#c0392b" />
  </Ico>
);

const MonitorIco = () => (
  <Ico width="24" height="24" viewBox="0 0 24 24">
    <path d="M2 3l20-2v15L2 17z" fill="#d9d9d9" stroke="#888" />
    <path d="M4 5l16-2v11L4 15z" fill="#eef4fb" />
    <path d="M5 11l3-1 2-4 2 5 2-2 2 1 3-1" stroke="#3c7fc9" fill="none" />
    <ellipse cx="14" cy="20" rx="6" ry="3" fill="#aaa" />
  </Ico>
);

const Ring = () => (
  <Ico width="20" height="20" viewBox="0 0 20 20">
    <circle cx="10" cy="10" r="8" fill="none" stroke="#d8d8d8" strokeWidth="2.200" />
  </Ico>
);

const TrayChevron = () => (
  <Ico width="12" height="7" viewBox="0 0 12 7">
    <path d="M1 6l5-5 5 5" stroke="#e6e6e6" strokeWidth="1.200" fill="none" />
  </Ico>
);

const BatteryIco = () => (
  <Ico width="16" height="12" viewBox="0 0 16 12">
    <rect x="3" y="3" width="12" height="8" fill="#e6e6e6" stroke="#e6e6e6" />
    <rect x="5" y="5" width="9" height="4" fill="#777" />
    <path d="M4 0v3M1 1v3" stroke="#e6e6e6" />
  </Ico>
);

const WifiIco = () => (
  <Ico width="15" height="15" viewBox="0 0 15 15">
    <path d="M1 14C1 7 6 2 14 1M4 14c0-5 4-9 10-10M7 14c0-3 3-6 7-6" stroke="#bbb" fill="none" strokeDasharray="1.500 .8" />
    <circle cx="11" cy="13" r="1.500" fill="#eee" />
  </Ico>
);

const VolumeIco = () => (
  <Ico width="16" height="15" viewBox="0 0 16 15">
    <path d="M1 5h3l4-4v13l-4-4H1z" fill="none" stroke="#e6e6e6" />
    <path d="M10 5a4 4 0 0 1 0 5M12 3a7 7 0 0 1 0 9" stroke="#e6e6e6" fill="none" />
  </Ico>
);

const SogouTray = () => (
  <Ico width="16" height="19" viewBox="0 0 16 19">
    <path d="M1 2l13-2 2 17-13 2z" fill="#e8481c" />
    <path d="M11 5.500H6.500v3.500H10.500V13H5" stroke="#fff" strokeWidth="2" fill="none" />
  </Ico>
);

const NoticeGlyph = () => (
  <Ico width="16" height="16" viewBox="0 0 16 16">
    <rect width="16" height="15" fill="#f2f2f2" />
    <path d="M3 4h10M3 7h10M3 10h8" stroke="#111" />
  </Ico>
);

/* ---------- 数据 ---------- */
const menus = [
  ["文件(F)", 48], ["编辑(E)", 49], ["楼层(L)", 48], ["构件(N)", 52], ["绘图(D)", 51],
  ["修改(M)", 54], ["钢筋量(Q)", 64], ["视图(V)", 50], ["工具(T)", 49], ["云应用(Y)", 61],
  ["BIM应用(I)", 70], ["在线服务(S)", 73], ["帮助(H)", 51], ["版本号(B)", 61],
];

const navRows = [
  { t: "构造柱(Z)", k: "gz", leaf: 1, rail: 1 },
  { t: "墙", folder: 1, rail: 1 },
  { t: "门窗洞", folder: 1, rail: 1 },
  { t: "梁", folder: 1, open: 1, rail: 1 },
  { t: "梁(L)", k: "beam", leaf: 1, rail: 1 },
  { t: "圈梁(E)", k: "ring", leaf: 1, last: 1, rail: 1 },
  { t: "板", folder: 1, rail: 1 },
  { t: "基础", folder: 1, open: 1, rail: 1 },
  { t: "基础梁(F)", k: "fb", leaf: 1, rail: 1 },
  { t: "筏板基础(M)", k: "raft", leaf: 1, rail: 1 },
  { t: "集水坑(K)", k: "pit", leaf: 1, rail: 1 },
  { t: "柱墩(Y)", k: "pad", leaf: 1, rail: 1 },
  { t: "筏板主筋(R)", k: "main", leaf: 1, rail: 1 },
  { t: "筏板负筋(X)", k: "neg", leaf: 1, rail: 1 },
  { t: "独立基础(P)", k: "ind", leaf: 1, rail: 1 },
  { t: "条形基础(T)", k: "strip", leaf: 1, rail: 1 },
  { t: "桩承台(V)", k: "cap", leaf: 1, rail: 1 },
  { t: "承台梁(F)", k: "fb", leaf: 1, rail: 1 },
  { t: "桩(U)", k: "pile", leaf: 1, rail: 1 },
  { t: "基础板带(W)", k: "band", leaf: 1, last: 1, rail: 1 },
  { t: "其它", folder: 1, open: 1, rail: 1 },
  { t: "后浇带(JD)", k: "pour", leaf: 1, rail: 1 },
  { t: "挑檐(T)", k: "eave", leaf: 1, rail: 1 },
  { t: "栏板(K)", k: "rail", leaf: 1, rail: 1 },
  { t: "压顶(YD)", k: "top", leaf: 1, last: 1, rail: 1 },
  { t: "自定义", folder: 1, open: 1 },
  { t: "自定义点", k: "point", leaf: 1 },
  { t: "自定义线(X)", k: "line", leaf: 1, hot: 1 },
  { t: "自定义面", k: "area", leaf: 1 },
  { t: "尺寸标注(W)", k: "dim", leaf: 1, last: 1 },
];

const comps = Array.from({ length: 28 }, (_, i) => `ZDYX-${i + 1}`);

/* ---------- CAD 图 ---------- */
const Tick = ({ x, y, back, len = 5, c = "#fff" }) => (
  <line
    x1={x - len}
    y1={back ? y - len : y + len}
    x2={x + len}
    y2={back ? y + len : y - len}
    stroke={c}
  />
);

const CadText = styled.text`
  font-family: "Liberation Mono", monospace;
  font-size: ${(p) => (p.$big ? 14.5 : 11)}px;
  font-weight: ${(p) => (p.$big ? "bold" : "normal")};
  fill: ${(p) => (p.$big ? "#0f0" : "#b9b9b9")};
  text-anchor: middle;
`;

const CadDrawing = () => {
  const xs = [605.5, 634.5, 671.5, 700.5];
  const ys = [219.5, 241.5, 438.5, 548.5];
  const green = "#0b7a0b";
  return (
    <CadCanvas viewBox="308 145 751 468">
      {/* 网格线 */}
      <g stroke="#bdbdbd">
        {xs.map((x) => <line key={x} x1={x} y1={219} x2={x} y2={548} />)}
        {ys.map((y) => <line key={y} x1={605} y1={y} x2={700} y2={y} />)}
      </g>
      {/* 绿色标注 */}
      <g stroke={green}>
        <line x1={557.5} y1={215} x2={557.5} y2={552} />
        {ys.map((y) => <line key={y} x1={551} y1={y} x2={605} y2={y} />)}
        {ys.map((y) => <Tick key={y} x={557.5} y={y} back len={3} c={green} />)}
        <line x1={603} y1={596.5} x2={703} y2={596.5} />
        {xs.map((x) => <line key={x} x1={x} y1={548} x2={x} y2={603} />)}
        {xs.map((x) => <Tick key={x} x={x} y={596.5} len={3} c={green} />)}
      </g>
      {/* 白色标注 */}
      <g stroke="#fff">
        <line x1={590.5} y1={219} x2={590.5} y2={548} />
        <line x1={715.5} y1={219} x2={715.5} y2={548} />
        {[219.5, 241.5, 548.5].map((y) => (
          <g key={y}>
            <line x1={583} y1={y} x2={598} y2={y} />
            <line x1={708} y1={y} x2={722} y2={y} />
            <Tick x={590.5} y={y} back />
            <Tick x={715.5} y={y} back />
          </g>
        ))}
        <line x1={605} y1={204.5} x2={700} y2={204.5} />
        {xs.map((x) => <line key={x} x1={x} y1={197} x2={x} y2={210} />)}
        {xs.map((x) => <Tick key={x} x={x} y={204.5} />)}
        <line x1={634} y1={563.5} x2={671} y2={563.5} />
        <line x1={634.5} y1={548} x2={634.5} y2={570} />
        <line x1={671.5} y1={548} x2={671.5} y2={570} />
        <Tick x={634.5} y={563.5} />
        <Tick x={671.5} y={563.5} />
      </g>
      {/* 多边形 */}
      <path
        d="M605.5 219.500H700.500V241.500H671.500V548.500H634.500V241.500H605.500Z"
        fill="none"
        stroke="#f00"
        strokeWidth="4"
      />
      {/* 灰色小字 */}
      <CadText x={570} y={235}>60</CadText>
      <CadText x={568} y={344}>540</CadText>
      <CadText x={568} y={498}>300</CadText>
      <CadText x={620} y={585}>80</CadText>
      <CadText x={653} y={586}>100</CadText>
      <CadText x={686} y={585}>80</CadText>
      {/* 绿色大字 */}
      <CadText $big x={620} y={201}>80</CadText>
      <CadText $big x={653.500} y={197}>100</CadText>
      <CadText $big x={686} y={201}>80</CadText>
      <CadText $big x={582} y={236}>60</CadText>
      <CadText $big x={724} y={236}>60</CadText>
      <CadText $big x={578} y={400}>840</CadText>
      <CadText $big x={728} y={400}>840</CadText>
      <CadText $big x={653.500} y={582}>100</CadText>
    </CadCanvas>
  );
};

const BackDrawing = () => {
  const dash = { stroke: "#3a3f48", strokeDasharray: "6 2 1 2" };
  return (
    <DarkCanvas viewBox="308 196 1058 459">
      <g {...dash}>
        <line x1={1100} y1={317.5} x2={1325} y2={317.5} />
        <line x1={1313.5} y1={317} x2={1313.5} y2={575} />
        <line x1={1325.5} y1={317} x2={1325.5} y2={560} />
        <line x1={1059} y1={459.5} x2={1325} y2={459.5} />
        <line x1={1059} y1={507.5} x2={1312} y2={507.5} />
        <line x1={1059} y1={558.5} x2={1305} y2={558.5} />
      </g>
      <line x1={1196} y1={423} x2={1327} y2={454} stroke="#7bbf5e" />
      <line x1={1059} y1={546.5} x2={1327} y2={546.5} stroke="#7bbf5e" />
      <line x1={1329.5} y1={458} x2={1329.5} y2={541} stroke="#7bbf5e" />
      <path d="M1196 427l127 30v84H1059" fill="none" stroke="#e8e8e8" />
      <path d="M1196 432l121 28" stroke="#c8161d" strokeWidth="3" fill="none" />
      <path d="M1059 462.500H1318q3 0 3 3V535q0 2-3 2H1059" stroke="#c8161d" strokeWidth="3" fill="none" />
      <line x1={1321} y1={502} x2={1321} y2={537} stroke="#c8161d" strokeWidth="4" />
      <line x1={1315.5} y1={501} x2={1315.5} y2={537} stroke="#fff" />
      <rect x={1313} y={514} width={2} height={5} fill="#0f0" />
      <line x1={1328} y1={500.5} x2={1334} y2={500.5} stroke="#6cc0e8" />
      <text x={1310} y={561} fontFamily="Liberation Mono" fontSize="11" fill="#3a3f48">109</text>
    </DarkCanvas>
  );
};

function App() {
  return (
    <Root>
      <GlobalStyle />

      <TitleBar>
        <AppLogo />
        <TitleText>
          广联达BIM钢筋算量软件 GGJ2013 - [C:\Users\Administrator.PC-20141127NRHM\Desktop\白龙村-2017-02-24-17-45-32(2168版).GGJ12]
        </TitleText>
        <WinControls>
          <WinBtn>
            <Ico width="11" height="1" viewBox="0 0 11 1"><path d="M0 .5h11" stroke="#999" /></Ico>
          </WinBtn>
          <WinBtn>
            <Ico width="11" height="11" viewBox="0 0 11 11">
              <path d="M.5 2.500h8v8h-8zM2.500 2.500v-2h8v8h-2" stroke="#999" fill="none" />
            </Ico>
          </WinBtn>
          <WinBtn>
            <CrossThin s={11} c="#999" />
          </WinBtn>
        </WinControls>
      </TitleBar>

      <MenuBar>
        {menus.map(([t, w]) => <MenuItem key={t} $w={w}>{t}</MenuItem>)}
        <MenuGroup $ml={2}>
          <ChangeIco />
          <MenuItem $w={57}><Plain $ml={4}>新建变更</Plain></MenuItem>
          <Caret $ml={0} />
          <Plain $ml={8}><RobotIco /></Plain>
          <Plain $ml={2}>广小二</Plain>
        </MenuGroup>
        <NoticeTab>多边形编辑器的网格尺..</NoticeTab>
        <MenuGroup $ml={6}>
          <UserIco />
          <Plain $ml={4}>13907298339</Plain>
          <Caret $ml={7} />
          <AccountText $ml={6}>造价豆:0</AccountText>
          <Plain $ml={9}><BellIco /></Plain>
          <Plain $ml={39}><More>»</More></Plain>
        </MenuGroup>
      </MenuBar>

      <ToolBar>
        <ToolSection $w={151} $pl={7}>
          <NewFileIco />
          <Plain $ml={8}><OpenIco /></Plain>
          <Caret $ml={5} />
          <Plain $ml={8}><SaveIco /></Plain>
          <ToolSep $ml={6} $h={24} />
          <Plain $ml={8}><UndoIco /></Plain>
          <Caret $ml={6} />
          <Plain $ml={20}><More>»</More></Plain>
        </ToolSection>
        <ToolSection $w={890} $ml={2} $pl={4}>
          <DrawIco />
          <ToolItem $ml={3}>绘图</ToolItem>
          <ToolItem $ml={10} $gap={8}>
            <Ico width="9" height="10" viewBox="0 0 9 10"><path d="M8.500 1.500V.5H.5L4.500 5l-4 4.500h8v-1" stroke="#111" strokeWidth="1.300" fill="none" /></Ico>
            汇总计算
          </ToolItem>
          <Plain $ml={7}><CloudIco /></Plain>
          <PeekBox />
        </ToolSection>
        <ToolSection $w={323} $muted>
          <ToolItem $ml={17}>缩放</ToolItem>
          <Caret $ml={7} $color="#888" />
          <ToolItem $ml={8} $gap={3}><HandIco />平移</ToolItem>
          <Caret $ml={6} $color="#888" />
          <ToolItem $ml={7} $gap={4}><RotateIco />屏幕旋转</ToolItem>
          <Caret $ml={1} $color="#888" />
          <ToolSep $ml={8} $h={18} />
          <ToolItem $ml={7} $gap={4}><FloorIco />选择楼层</ToolItem>
          <Plain $ml={33}><More>»</More></Plain>
        </ToolSection>
      </ToolBar>

      <Body>
        <Nav>
          <NavHead>
            <span>模块导航栏</span>
            <Plain $ml={70}><PinIco /></Plain>
            <Plain $ml={10}><CrossThin s={8} /></Plain>
          </NavHead>
          <NavBtn>工程设置</NavBtn>
          <NavBtn>绘图输入</NavBtn>
          <NavTools>
            <ExpandIco plus />
            <ExpandIco />
          </NavTools>
          <NavTree>
            <NavRows>
              {navRows.map((r) => (
                <NavRow key={r.t} $leaf={r.leaf} $last={r.last} $rail={r.rail}>
                  {r.hot && <HotRow />}
                  <RowContent>
                    {r.folder && <Chevron open={r.open} />}
                    {r.folder && <Plain $ml={7}><FolderIco open={r.open} /></Plain>}
                    {r.leaf && <TreeIco kind={r.k} />}
                    <NavLabel><span><Sim>{r.t}</Sim></span></NavLabel>
                  </RowContent>
                  {r.hot && (
                    <MiniColumns>
                      <MiniCol />
                      <MiniCol />
                    </MiniColumns>
                  )}
                </NavRow>
              ))}
            </NavRows>
            <ScrollBar>
              <ScrollArrow>
                <Ico width="9" height="6" viewBox="0 0 9 6"><path d="M1 5l3.500-3.500L8 5" stroke="#555" strokeWidth="1.500" fill="none" /></Ico>
              </ScrollArrow>
              <ScrollTrack><ScrollThumb /></ScrollTrack>
              <ScrollArrow>
                <Ico width="9" height="6" viewBox="0 0 9 6"><path d="M1 1l3.500 3.500L8 1" stroke="#555" strokeWidth="1.500" fill="none" /></Ico>
              </ScrollArrow>
            </ScrollBar>
          </NavTree>
          <NavBtn>单构件输入</NavBtn>
          <NavBtn>报表预览</NavBtn>
        </Nav>

        <CompPanel>
          <CompTools>
            <NewCompIco />
            <Plain $ml={4}>新建</Plain>
            <Caret $ml={3} />
            <Plain $ml={9}><BigX /></Plain>
            <Plain $ml={6}>删除</Plain>
            <Plain $ml={7}><CopyIco /></Plain>
          </CompTools>
          <SearchBox>搜索构件...</SearchBox>
          <CompTree>
            <CompRoot>
              <Chevron open />
              <Plain $ml={7}><TreeIco kind="line" /></Plain>
              <Plain $ml={5}>自定义线</Plain>
            </CompRoot>
            {comps.map((c, i) => (
              <CompRow key={c} $last={i === comps.length - 1}>
                <CompChip $on={i === comps.length - 1}>
                  <GearDot />
                  <CompName>{c}</CompName>
                </CompChip>
              </CompRow>
            ))}
          </CompTree>
        </CompPanel>

        <Workspace>
          <BlueBand />
          <PropStrip />
          <GreyBlock />
          <RedRule $h={2} />
          <BackDrawing />
          <RedRule $h={2} />
          <HintRow><Sim>(X: -1000 Y: 300) 选择前的进行编辑; 选择后进行拖拽移动</Sim></HintRow>
        </Workspace>
      </Body>

      <StatusBar>
        <StatusCell $w={148} />
        <StatusCell $w={76}><Sim>层高:4.5m</Sim></StatusCell>
        <StatusCell $w={98}><Sim>底标高:-0.03m</Sim></StatusCell>
        <StatusCell $w={47}><Sim>0</Sim></StatusCell>
        <StatusCell>名称在当前层当前构件类型下不允许重名</StatusCell>
        <StatusCell $w={70}><Sim>806.2 FPS</Sim></StatusCell>
      </StatusBar>

      <Taskbar>
        <StartBtn><WinLogo /></StartBtn>
        <SearchTask>
          <Ring />
          <SearchTaskText>在这里输入你要搜索的内容</SearchTaskText>
          <Plain $ml={0}><MicIco c="#8e8e8e" w={11} h={15} /></Plain>
          <Plain $ml={14} />
        </SearchTask>
        <TaskIcon $ml={1}><Pinwheel /></TaskIcon>
        <TaskIcon><Swirl /></TaskIcon>
        <TaskSep />
        <TaskIcon><EdgeIco /></TaskIcon>
        <TaskIcon><StoreIco /></TaskIcon>
        <TaskIcon><ExplorerIco /></TaskIcon>
        <TaskIcon $active $open><GtjIco /></TaskIcon>
        <TaskIcon $open><GreenE /></TaskIcon>
        <TaskIcon $open><PadIco /></TaskIcon>
        <TaskIcon $open><NoteIco /></TaskIcon>
        <TaskIcon $open><MonitorIco /></TaskIcon>
        <Tray>
          <TrayItem $w={60}>
            <span>14%</span>
            <span>CPU使用</span>
          </TrayItem>
          <TrayItem $w={24} $ml={7}><TrayChevron /></TrayItem>
          <TrayItem $w={24}><BatteryIco /></TrayItem>
          <TrayItem $w={26}><WifiIco /></TrayItem>
          <TrayItem $w={20}><VolumeIco /></TrayItem>
          <TrayItem $w={24} $fs={14}>中</TrayItem>
          <TrayItem $w={34}><SogouTray /></TrayItem>
          <TrayItem $w={68} $ml={5}>
            <span>17:40</span>
            <span>2017/6/6</span>
          </TrayItem>
          <TrayItem $w={44}>
            <NoticeIcon>
              <NoticeGlyph />
              <NoticeBadge>2</NoticeBadge>
            </NoticeIcon>
          </TrayItem>
        </Tray>
      </Taskbar>

      <Editor>
        <EditorTitle>
          多边形编辑器
          <EditorClose>×</EditorClose>
        </EditorTitle>
        <EditorTools $bg="#fafafa">
          <Grip />
          <ToolItem $ml={6}><GridIco />定义网格</ToolItem>
          <ToolSep $ml={8} />
          <ToolItem $ml={6} $off><LineIco />画直线</ToolItem>
          <ToolItem $ml={7} $off><ArcIco />画弧</ToolItem>
          <ToolItem $ml={8} $off><CircleIco />画圆</ToolItem>
          <ToolSep $ml={8} />
          <ToolItem $ml={5}><BigX />清除多边形</ToolItem>
          <ToolSep $ml={7} />
          <ToolItem $ml={7}><UndoIco s={13} />回退</ToolItem>
          <ToolSep $ml={7} />
          <ToolItem $ml={5}><DiskIco up />导入</ToolItem>
          <ToolItem $ml={7}><DiskIco />导出</ToolItem>
          <ToolSep $ml={7} />
          <ToolItem $ml={5}><SearchIco />查询</ToolItem>
        </EditorTools>
        <EditorTools $bg="linear-gradient(#f7f7f7, #efefef)">
          <Grip />
          <Radio $on $ml={2} />
          <Plain $ml={9}>不偏移</Plain>
          <Radio $ml={10} />
          <Plain $ml={8}>正交</Plain>
          <Radio $ml={6} />
          <Plain $ml={9}>极坐标</Plain>
          <ToolSep $ml={14} />
          <Plain $ml={2}>X =</Plain>
          <SpinBox $ml={9}>
            0
            <SpinArrows><SpinUp /><SpinDown /></SpinArrows>
          </SpinBox>
          <Plain $ml={5}>mm</Plain>
          <Plain $ml={15}>Y =</Plain>
          <SpinBox $ml={7}>
            0
            <SpinArrows><SpinUp /><SpinDown /></SpinArrows>
          </SpinBox>
          <Plain $ml={5}>mm</Plain>
        </EditorTools>
        <CadDrawing />
        <TabRow><TabLabel>动态输入</TabLabel></TabRow>
        <ActionRow>
          <CmdBtn $w={104} $ml={313}><Sim>从CAD选择截面图</Sim></CmdBtn>
          <CmdBtn $w={113} $ml={24}><Sim>在CAD中绘制截面图</Sim></CmdBtn>
          <CmdBtn $w={72} $ml={25}>确定</CmdBtn>
          <CmdBtn $w={71} $ml={16}>取消</CmdBtn>
        </ActionRow>
        <EditorStatus>
          <EditorStatusCell $w={147}><Sim>坐标 (X: -575 Y: 1097)</Sim></EditorStatusCell>
          <EditorStatusCell $w={146}><Sim>命令: 无</Sim></EditorStatusCell>
          <EditorStatusCell>绘图结束</EditorStatusCell>
          <SizeGrip />
        </EditorStatus>
      </Editor>

      <SogouBar>
        <SogouSlot>英</SogouSlot>
        <SogouSlot>',</SogouSlot>
        <SogouSlot><MicIco /></SogouSlot>
        <SogouSlot><KeyboardIco /></SogouSlot>
        <SogouSlot><PersonIco /></SogouSlot>
        <SogouSlot><ShirtIco /></SogouSlot>
        <SogouSlot><WrenchIco /></SogouSlot>
      </SogouBar>
      <SogouLogo>S</SogouLogo>

      <Badge>75</Badge>

      <Dialog>
        <DialogTitle>
          定义网格
          <Plain $ml={0}>
            <Ico width="26" height="25" viewBox="0 0 26 25">
              <path d="M8 7.500l10 10M18 7.500l-10 10" stroke="#111" />
            </Ico>
          </Plain>
        </DialogTitle>
        <DialogBody>
          <Group>
            <GroupLegend><Sim>水平方向间距(mm)=>间距*个数,间距,间距*个数,间距,...</Sim></GroupLegend>
            <TextBox $border="#6d8092"><Selected><Lat>80,100,80</Lat></Selected></TextBox>
          </Group>
          <Group>
            <GroupLegend><Sim>垂直方向间距(mm)=>间距*个数,间距,间距*个数,间距,...</Sim></GroupLegend>
            <TextBox $border="#808080"><Lat>300,540,60</Lat></TextBox>
          </Group>
          <DialogButtons>
            <CmdBtn $w={72} $ml={0}>确定</CmdBtn>
            <CmdBtn $w={72} $ml={0}>取消</CmdBtn>
          </DialogButtons>
        </DialogBody>
      </Dialog>
    </Root>
  );
}

export default App;
